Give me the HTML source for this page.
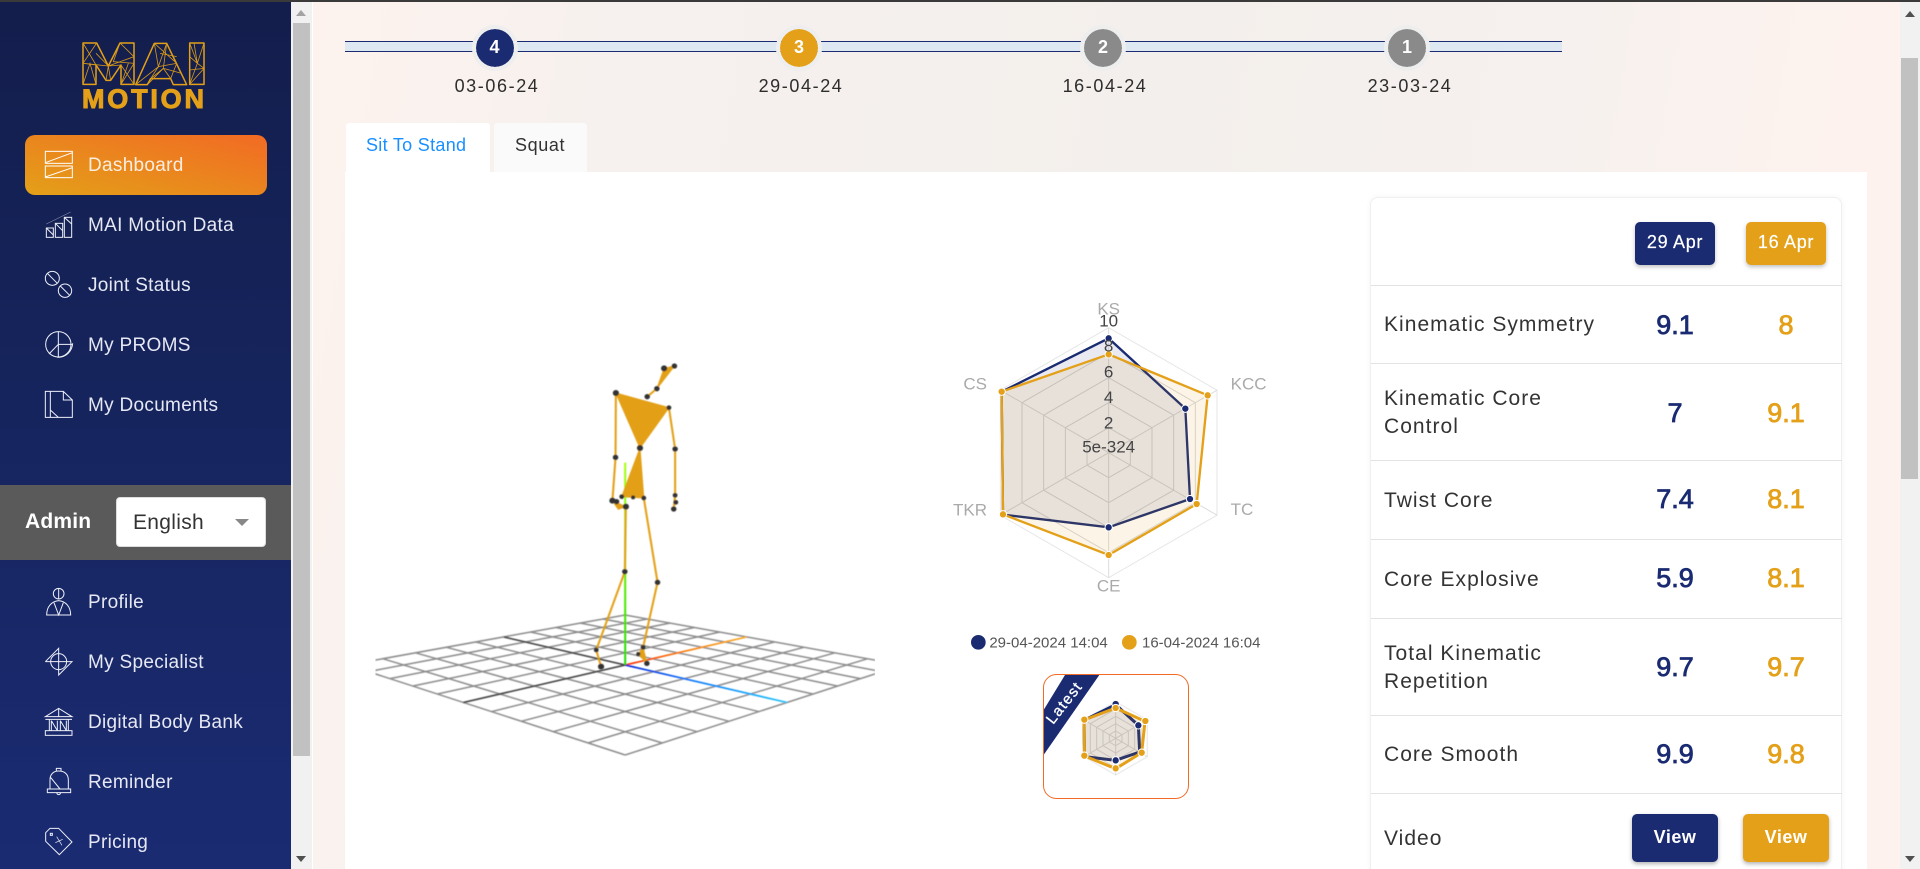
<!DOCTYPE html>
<html lang="en"><head><meta charset="utf-8"><title>MAI Motion Dashboard</title>
<style>
*{box-sizing:border-box;margin:0;padding:0}
html,body{width:1920px;height:869px;overflow:hidden;background:#fff;font-family:"Liberation Sans",Arial,sans-serif}
#w{position:absolute;left:0;top:0;width:1920px;height:869px;overflow:hidden}
.a{position:absolute}
.t{position:absolute;white-space:nowrap}
.nav{position:absolute;left:88px;height:30px;line-height:30px;font-size:19px;letter-spacing:.3px;color:#e6e8f3;white-space:nowrap}
.step{position:absolute;top:25px;width:46px;height:46px;border-radius:50%;border:4px solid #eeeeee;color:#fff;font-weight:bold;font-size:18px;line-height:37px;text-align:center}
.date{position:absolute;top:74px;width:120px;text-align:center;font-size:18px;letter-spacing:1.6px;line-height:24px;color:#2d2d2d}
.line{position:absolute;left:1371px;width:471px;height:1px;background:#e3e3e3}
.lab{position:absolute;left:1384px;font-size:21px;letter-spacing:1.03px;line-height:28px;height:28px;color:#333;white-space:nowrap}
.val{position:absolute;width:90px;height:32px;line-height:32px;text-align:center;font-size:27px;-webkit-text-stroke:.8px currentColor}
.n{color:#1a2b72}.o{color:#e3a018}
.c1{left:1630px}.c2{left:1741px}
.hb{position:absolute;top:222px;width:80px;height:43px;border-radius:5px;color:#fff;font-size:18px;letter-spacing:.7px;line-height:41px;text-align:center;box-shadow:0 2px 4px rgba(0,0,0,.25);-webkit-text-stroke:.2px #fff}
.vb{position:absolute;top:814px;width:86px;height:48px;border-radius:5px;color:#fff;font-size:18px;font-weight:bold;letter-spacing:.5px;line-height:46px;text-align:center;box-shadow:0 2px 4px rgba(0,0,0,.3)}
svg{position:absolute;overflow:visible}
</style></head><body><div id="w">

<!-- main background -->
<div class="a" style="left:312px;top:0;width:1608px;height:869px;background:linear-gradient(100deg,#fdf2ee 0%,#f6f1ee 18%,#f3efec 50%,#f6f1ee 72%,#fdf2ee 88%)"></div>
<div class="a" style="left:312px;top:0;width:1px;height:869px;background:#fff"></div>

<!-- sidebar -->
<div class="a" style="left:0;top:0;width:291px;height:869px;background:linear-gradient(180deg,#131e4c 0%,#16245d 45%,#1a2b72 100%)"></div>
<div class="a" style="left:291px;top:0;width:21px;height:869px;background:#f1f1f1"></div>
<div class="a" style="left:293px;top:23px;width:17px;height:733px;background:#c1c1c1"></div>
<div class="a" style="left:296px;top:10px;width:0;height:0;border-left:5px solid transparent;border-right:5px solid transparent;border-bottom:6px solid #a3a3a3"></div>
<div class="a" style="left:296px;top:856px;width:0;height:0;border-left:5px solid transparent;border-right:5px solid transparent;border-top:6px solid #505050"></div>

<!-- logo and icons -->
<svg style="left:0;top:0" width="320" height="869" viewBox="0 0 960 2607">
 <g fill="none" stroke="#e3a018" stroke-width="4.5" stroke-linejoin="round">
  <path d="M249,129H290L325,198L360,129H402V253H363V195L332,241H318L288,195V253H249Z"/>
  <path d="M463,130H500L560,254H520L512,236H452L442,254H407Z"/>
  <path d="M569,129H612V253H569Z"/>
 </g>
 <g fill="none" stroke="#d99a18" stroke-width="2.4">
  <path d="M249,129L288,195L249,190L290,129M249,190L325,198L288,160M249,253L270,190L288,253M363,195L325,198L402,170L360,129L340,185L402,190L363,253L385,190M402,253L363,195M325,198L318,241M325,198L332,241"/>
  <path d="M463,130L475,200L500,130L530,190L475,200L452,236L490,205L512,236L530,190L560,254M463,130L530,190M407,254L475,200M442,254L490,205M500,130L490,205L545,220M480,160L530,170"/>
  <path d="M569,129L592,190L612,129M592,190L569,253L612,205L569,210M592,190L612,205M582,129L592,190M569,170L592,190"/>
 </g>
 <!-- active item -->
 <defs><linearGradient id="dg" x1="0" y1="1" x2="1" y2="0"><stop offset="0" stop-color="#e3a018"/><stop offset="1" stop-color="#f26a24"/></linearGradient></defs>
 <rect x="75" y="405" width="726" height="180" rx="30" fill="url(#dg)"/>
 <g fill="none" stroke="#fff" stroke-width="3">
  <rect x="136" y="454" width="81" height="36"/><path d="M136,488L217,458"/>
  <rect x="136" y="498" width="81" height="35"/><path d="M136,531L217,503"/>
 </g>
 <g fill="none" stroke="#eef0f8" stroke-width="3">
  <rect x="139" y="684" width="21" height="28"/><path d="M139,684L160,705"/>
  <rect x="166" y="670" width="22" height="42"/><path d="M166,670L188,692"/>
  <rect x="193" y="652" width="22" height="60"/><path d="M193,652L215,672"/>
  <path d="M139,672L212,636" stroke-width="1.5" stroke="#aab"/>
  <circle cx="157" cy="835" r="21"/><path d="M142,820L172,850"/>
  <circle cx="195" cy="872" r="20"/><path d="M181,858L209,886"/>
  <circle cx="175" cy="1033" r="38"/><path d="M175,995V1072M175,1033H218M175,1033L147,1062M218,1030C216,1055 198,1072 172,1072"/>
  <path d="M136,1174H190L217,1200V1252H136ZM151,1174V1252M190,1174V1200H217M151,1230L175,1252"/>
 </g>
 <!-- lower icons -->
 <g transform="translate(0,1320)" fill="none" stroke="#eef0f8" stroke-width="3">
  <circle cx="176" cy="461" r="16"/><path d="M176,445V477"/>
  <path d="M140,525C140,500 155,484 176,482C197,484 212,500 212,525ZM162,488L176,525L190,488"/>
  <path d="M136,665L176,625V705L216,665H136"/><circle cx="176" cy="665" r="24"/>
  <path d="M136,830L176,805L216,830ZM176,805V830M136,838H216M148,838V872M205,838V872M154,842L172,872M154,842V872M172,842V872M181,842V872M181,842L199,872M199,842V872"/><rect x="136" y="872" width="80" height="14"/>
  <path d="M150,1047V1020C150,1003 160,993 176,993C194,993 205,1003 205,1020V1047M142,1047H212V1058H142ZM169,993V985H183V993M170,1058C172,1066 180,1066 182,1058M150,1010L180,1047"/>
  <path d="M137,1178L150,1165H176L216,1206L178,1244L137,1204Z"/><rect x="151" y="1180" width="6" height="6"/><path d="M166,1208L188,1198M170,1190L186,1216" stroke-width="2"/>
 </g>
</svg>
<div class="t" style="left:82px;top:86px;font-size:27px;font-weight:bold;letter-spacing:2.8px;line-height:26px;color:#e3a018;-webkit-text-stroke:1px #e3a018">MOTION</div>

<div class="nav" style="top:151px;color:#fbeee0">Dashboard</div>
<div class="nav" style="top:211px">MAI Motion Data</div>
<div class="nav" style="top:271px">Joint Status</div>
<div class="nav" style="top:331px">My PROMS</div>
<div class="nav" style="top:391px">My Documents</div>
<div class="nav" style="top:588px">Profile</div>
<div class="nav" style="top:648px">My Specialist</div>
<div class="nav" style="top:708px">Digital Body Bank</div>
<div class="nav" style="top:768px">Reminder</div>
<div class="nav" style="top:828px">Pricing</div>

<!-- admin bar -->
<div class="a" style="left:0;top:485px;width:291px;height:75px;background:#5a5a5a"></div>
<div class="t" style="left:25px;top:507px;font-size:21px;font-weight:bold;letter-spacing:.2px;line-height:30px;color:#fff">Admin</div>
<div class="a" style="left:116px;top:497px;width:150px;height:50px;background:#fff;border-radius:4px;border:1px solid #ddd"></div>
<div class="t" style="left:133px;top:508px;font-size:21px;letter-spacing:.3px;line-height:30px;color:#333">English</div>
<div class="a" style="left:235px;top:519px;width:0;height:0;border-left:7px solid transparent;border-right:7px solid transparent;border-top:7px solid #888"></div>

<!-- stepper -->
<div class="a" style="left:345px;top:41px;width:1217px;height:11px;background:#dde8f3;border-top:1px solid #1a2b72;border-bottom:1px solid #1a2b72"></div>
<div class="step" style="left:471.5px;background:#1a2b72;background-clip:padding-box">4</div>
<div class="step" style="left:776px;background:#e3a018;background-clip:padding-box">3</div>
<div class="step" style="left:1080px;background:#8a8a8a;background-clip:padding-box">2</div>
<div class="step" style="left:1384px;background:#8a8a8a;background-clip:padding-box">1</div>
<div class="date" style="left:437px">03-06-24</div>
<div class="date" style="left:741px">29-04-24</div>
<div class="date" style="left:1045px">16-04-24</div>
<div class="date" style="left:1350px">23-03-24</div>

<!-- tabs -->
<div class="a" style="left:346px;top:123px;width:144px;height:50px;background:#fff;border-radius:3px 3px 0 0"></div>
<div class="t" style="left:366px;top:130px;font-size:18px;letter-spacing:.3px;line-height:30px;color:#1890ff">Sit To Stand</div>
<div class="a" style="left:494px;top:123px;width:93px;height:49px;background:#fafafa;border-radius:3px 3px 0 0"></div>
<div class="t" style="left:515px;top:130px;font-size:18px;letter-spacing:.6px;line-height:30px;color:#333">Squat</div>

<!-- card -->
<div class="a" style="left:345px;top:172px;width:1522px;height:697px;background:#fff"></div>

<!-- 3D skeleton -->
<svg style="left:360px;top:340px" width="540" height="440" viewBox="0 0 1568 1320" preserveAspectRatio="none">
 <defs>
  <clipPath id="cl"><rect x="45" y="700" width="1450" height="600"/></clipPath>
  <filter id="bl" filterUnits="userSpaceOnUse" x="-100" y="0" width="1800" height="1320"><feGaussianBlur stdDeviation="1.3"/></filter>
  <linearGradient id="ax1" gradientUnits="userSpaceOnUse" x1="770" y1="975" x2="1122" y2="891"><stop offset="0" stop-color="#ff2a00"/><stop offset=".45" stop-color="#ff7a00"/><stop offset="1" stop-color="#ffb020"/></linearGradient>
  <linearGradient id="ax2" gradientUnits="userSpaceOnUse" x1="770" y1="975" x2="1240" y2="1087"><stop offset="0" stop-color="#0020e0"/><stop offset=".4" stop-color="#0a78ff"/><stop offset="1" stop-color="#1cc8ff"/></linearGradient>
  <linearGradient id="ax3" gradientUnits="userSpaceOnUse" x1="770" y1="975" x2="770" y2="368"><stop offset="0" stop-color="#22e000"/><stop offset="1" stop-color="#a8ff10"/></linearGradient>
 </defs>
 <g clip-path="url(#cl)"><g filter="url(#bl)" fill="none" stroke="#8c8c8c" stroke-width="4.5">
  <path d="M770,825L-35,975M834,837L24,995M901,849L87,1016M971,862.5L154,1038M1045,876L225,1062M1122,891L300,1087.5M1203.5,906L381,1115M1289,922L468,1144M1379,938.5L561,1175M1474,956L662,1209M1575,975L770,1245"/>
  <path d="M770,825L1575,975M706,837L1516,995M639,849L1453,1016M569,862.5L1386,1038M495,876L1315,1062M418,891L1240,1087.5M336.5,906L1159,1115M251,922L1072,1144M161,938.5L979,1175M66,956L878,1209M-35,975L770,1245"/>
  <path d="M770,975L300,1087.5M770,975L418,891" stroke="#444"/>
  <path d="M770,975L1122,891" stroke="url(#ax1)" stroke-width="5"/>
  <path d="M770,975L1240,1087.5" stroke="url(#ax2)" stroke-width="5"/>
 </g></g>
 <g filter="url(#bl)">
 <path d="M770,975V368" stroke="url(#ax3)" stroke-width="6" fill="none"/>
 <g fill="#e3a018" stroke="#e3a018" stroke-width="3" stroke-linejoin="round">
  <path d="M743,159L897,203L813,324Z"/>
  <path d="M813,324L760,470L824,474Z"/>
  <path d="M883,85L913,78L862,146Z"/>
  <path d="M733,482L772,500L750,508Z"/>
  <path d="M822,922L808,942L833,970Z"/>
 </g>
 <g fill="none" stroke="#e3a018" stroke-width="6" stroke-linejoin="round">
  <path d="M743,159L742,352L733,482M897,203L915,327L915,466L911,507M862,146L834,170M772,500L769,695L686,930L700,980M824,474L864,727L822,922"/>
 </g>
 <g fill="#333">
  <circle cx="883" cy="85" r="9"/><circle cx="913" cy="78" r="8"/><circle cx="862" cy="146" r="8"/><circle cx="834" cy="170" r="8"/>
  <circle cx="743" cy="159" r="9"/><circle cx="897" cy="203" r="7"/><circle cx="813" cy="324" r="9"/>
  <circle cx="742" cy="352" r="8"/><circle cx="915" cy="327" r="8"/>
  <circle cx="733" cy="482" r="9"/><circle cx="745" cy="485" r="8"/><circle cx="772" cy="500" r="9"/>
  <circle cx="760" cy="470" r="7"/><circle cx="793" cy="472" r="6"/><circle cx="824" cy="474" r="7"/>
  <circle cx="915" cy="466" r="7"/><circle cx="917" cy="487" r="7"/><circle cx="911" cy="507" r="8"/>
  <circle cx="769" cy="695" r="8"/><circle cx="864" cy="727" r="8"/>
  <circle cx="686" cy="930" r="7"/><circle cx="700" cy="980" r="9"/>
  <circle cx="822" cy="922" r="7"/><circle cx="808" cy="942" r="6"/><circle cx="833" cy="970" r="8"/>
 </g>
 </g>
</svg>

<!-- radar -->
<svg style="left:930px;top:280px" width="370" height="330" viewBox="0 0 1110 990">
 <g fill="none" stroke="#e6e6e6" stroke-width="3">
  <path d="M536,143L861,330.500L861,705.500L536,893L211,705.500L211,330.500Z"/>
  <path d="M536,218L796,368L796,668L536,818L276,668L276,368Z" stroke="#d8d8d8"/>
  <path d="M536,293L731,405.500L731,630.500L536,743L341,630.500L341,405.500Z" stroke="#d8d8d8"/>
  <path d="M536,368L666,443L666,593L536,668L406,593L406,443Z" stroke="#d8d8d8"/>
  <path d="M536,443L601,480.500L601,555.500L536,593L471,555.500L471,480.500Z" stroke="#d8d8d8"/>
  <path d="M536,518V143M536,518L861,330.500M536,518L861,705.500M536,518V893M536,518L211,705.500M536,518L211,330.500" stroke="#dcdcdc"/>
 </g>
 <path d="M536,175L766,386L780,657L536,742L219,704L215,335Z" fill="rgba(26,43,114,.1)" stroke="#1a2b72" stroke-width="7"/>
 <path d="M536,223L833,346L800,672L536,825L219,703L215,335Z" fill="rgba(227,160,24,.1)" stroke="#e3a018" stroke-width="7"/>
 <g fill="#1a2b72" stroke="#fff" stroke-width="3">
  <circle cx="536" cy="175" r="11"/><circle cx="766" cy="386" r="11"/><circle cx="780" cy="657" r="11"/><circle cx="536" cy="742" r="11"/>
 </g>
 <g fill="#e3a018" stroke="#fff" stroke-width="3">
  <circle cx="536" cy="223" r="11"/><circle cx="833" cy="346" r="11"/><circle cx="800" cy="672" r="11"/><circle cx="536" cy="825" r="11"/><circle cx="219" cy="703" r="11"/><circle cx="215" cy="335" r="11"/>
 </g>
 <g font-family="'Liberation Sans',Arial,sans-serif" font-size="51" fill="#444" text-anchor="middle">
  <text x="536" y="103" fill="#aaa">KS</text>
  <text x="536" y="139">10</text>
  <text x="536" y="215">8</text>
  <text x="536" y="292">6</text>
  <text x="536" y="369">4</text>
  <text x="536" y="445">2</text>
  <text x="536" y="517">5e-324</text>
  <text x="536" y="934" fill="#aaa">CE</text>
  <text x="902" y="329" fill="#aaa" text-anchor="start">KCC</text>
  <text x="902" y="705" fill="#aaa" text-anchor="start">TC</text>
  <text x="171" y="707" fill="#aaa" text-anchor="end">TKR</text>
  <text x="171" y="329" fill="#aaa" text-anchor="end">CS</text>
 </g>
</svg>

<!-- legend + thumbnail -->
<svg style="left:950px;top:620px" width="320" height="200" viewBox="0 0 960 600">
 <circle cx="85" cy="67" r="22" fill="#1a2b72"/>
 <circle cx="538" cy="67" r="22" fill="#e3a018"/>
 <g font-family="'Liberation Sans',Arial,sans-serif" font-size="45" fill="#555">
  <text x="118" y="83">29-04-2024 14:04</text>
  <text x="576" y="83">16-04-2024 16:04</text>
 </g>
 <rect x="280.500" y="163.500" width="435" height="372" rx="39" fill="#fff" stroke="#f26a24" stroke-width="3"/>
 <path d="M345,165H448L282,403V268Z" fill="#1a2b72"/>
 <text transform="translate(345,250) rotate(-52)" font-family="'Liberation Sans',Arial,sans-serif" font-size="45" letter-spacing="4" fill="#fff" stroke="#fff" stroke-width="1" text-anchor="middle" dominant-baseline="middle">Latest</text>
 <g fill="none" stroke="#dcdcdc" stroke-width="3">
  <path d="M497,245L592,300L592,410L497,465L402,410L402,300Z" stroke="#ececec" stroke-width="4"/>
  <path d="M497,267L573,311L573,399L497,443L421,399L421,311Z"/>
  <path d="M497,289L554,322L554,388L497,421L440,388L440,322Z"/>
  <path d="M497,311L535,333L535,377L497,399L459,377L459,333Z"/>
  <path d="M497,333L516,344L516,366L497,377L478,366L478,344Z"/>
  <path d="M497,355V245M497,355L592,300M497,355L592,410M497,355V465M497,355L402,410M497,355L402,300"/>
 </g>
 <path d="M497,254L565,316L569,396L497,421L403.500,410L402,301Z" fill="rgba(26,43,114,.1)" stroke="#1a2b72" stroke-width="9"/>
 <path d="M497,264L585,304L575,398L497,446L403.500,408L402,300Z" fill="rgba(227,160,24,.1)" stroke="#e3a018" stroke-width="9"/>
 <g fill="#1a2b72" stroke="#fff" stroke-width="3">
  <circle cx="497" cy="252" r="11"/><circle cx="565" cy="316" r="11"/><circle cx="497" cy="421" r="11"/>
 </g>
 <g fill="#e3a018" stroke="#fff" stroke-width="3">
  <circle cx="497" cy="264" r="11"/><circle cx="586" cy="303" r="11"/><circle cx="575" cy="398" r="11"/><circle cx="497" cy="445" r="11"/><circle cx="403" cy="407" r="11"/><circle cx="403" cy="299" r="11"/>
 </g>
</svg>

<!-- table card -->
<div class="a" style="left:1370px;top:197px;width:472px;height:700px;background:#fff;border:1px solid #f0f0f0;border-radius:8px;box-shadow:0 0 6px rgba(0,0,0,.05)"></div>
<div class="hb" style="left:1635px;background:#1a2b72">29 Apr</div>
<div class="hb" style="left:1746px;background:#e3a018">16 Apr</div>
<div class="line" style="top:285px"></div>
<div class="line" style="top:363px"></div>
<div class="line" style="top:460px"></div>
<div class="line" style="top:539px"></div>
<div class="line" style="top:618px"></div>
<div class="line" style="top:715px"></div>
<div class="line" style="top:793px"></div>

<div class="lab" style="top:311px">Kinematic Symmetry</div>
<div class="val n c1" style="top:309px">9.1</div><div class="val o c2" style="top:309px">8</div>
<div class="lab" style="top:385px">Kinematic Core</div>
<div class="lab" style="top:413px">Control</div>
<div class="val n c1" style="top:397px">7</div><div class="val o c2" style="top:397px">9.1</div>
<div class="lab" style="top:487px">Twist Core</div>
<div class="val n c1" style="top:483px">7.4</div><div class="val o c2" style="top:483px">8.1</div>
<div class="lab" style="top:566px">Core Explosive</div>
<div class="val n c1" style="top:562px">5.9</div><div class="val o c2" style="top:562px">8.1</div>
<div class="lab" style="top:640px">Total Kinematic</div>
<div class="lab" style="top:668px">Repetition</div>
<div class="val n c1" style="top:651px">9.7</div><div class="val o c2" style="top:651px">9.7</div>
<div class="lab" style="top:741px">Core Smooth</div>
<div class="val n c1" style="top:738px">9.9</div><div class="val o c2" style="top:738px">9.8</div>
<div class="lab" style="top:825px">Video</div>
<div class="vb" style="left:1632px;background:#1a2b72">View</div>
<div class="vb" style="left:1743px;background:#e3a018">View</div>

<!-- main scrollbar -->
<div class="a" style="left:1900px;top:0;width:20px;height:869px;background:#f1f1f1"></div>
<div class="a" style="left:1901px;top:58px;width:17px;height:421px;background:#c1c1c1"></div>
<div class="a" style="left:1905px;top:11px;width:0;height:0;border-left:5px solid transparent;border-right:5px solid transparent;border-bottom:6px solid #505050"></div>
<div class="a" style="left:1905px;top:856px;width:0;height:0;border-left:5px solid transparent;border-right:5px solid transparent;border-top:6px solid #505050"></div>

<!-- top strip -->
<div class="a" style="left:0;top:0;width:1920px;height:2px;background:#3a3a3a"></div>
</div></body></html>
